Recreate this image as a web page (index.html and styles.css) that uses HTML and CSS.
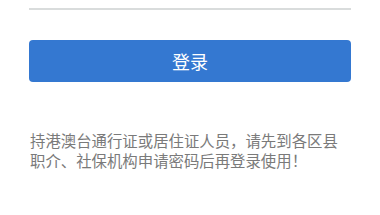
FILE: index.html
```html
<!DOCTYPE html>
<html lang="zh">
<head>
<meta charset="utf-8">
<link rel="stylesheet" href="styles.css">
</head>
<body>
<div class="page">
  <div class="underline"></div>
  <button class="login">登录</button>
  <p class="note">持港澳台通行证或居住证人员，请先到各区县职介、社保机构申请密码后再登录使用！</p>
</div>
</body>
</html>
```
FILE: styles.css
```css
html, body {
  margin: 0;
  padding: 0;
  background: #ffffff;
}
.page {
  padding: 8px 29px 0 29px;
  font-family: "Noto Sans CJK SC", "Noto Sans", sans-serif;
}
.underline {
  height: 2px;
  background: #d9dcdc;
}
.login {
  display: block;
  width: 100%;
  height: 42px;
  margin-top: 30px;
  border: none;
  border-radius: 4px;
  background: #3478d1;
  color: #ffffff;
  font-family: "Noto Sans CJK SC", "Noto Sans", sans-serif;
  font-size: 18px;
  padding: 0;
}
.note {
  margin: 48px 0 0 1px;
  font-size: 15.4px;
  line-height: 20px;
  color: #7a7a7a;
  word-break: break-all;
}
```
